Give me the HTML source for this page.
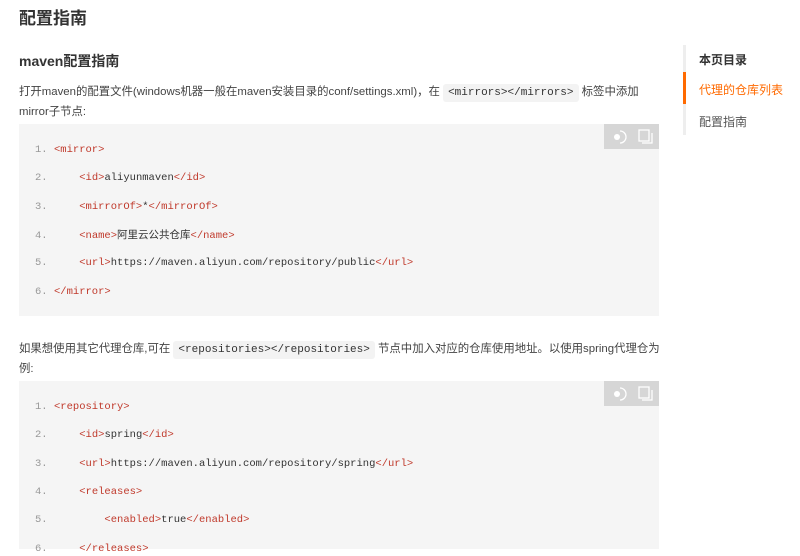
<!DOCTYPE html>
<html><head><meta charset="utf-8"><style>
body{margin:0;width:800px;height:549px;overflow:hidden;background:#fff;font-family:"Liberation Sans","Noto Sans CJK SC",sans-serif;color:#333;position:relative}
.a{position:absolute;white-space:nowrap}
h1{position:absolute;left:19px;top:4px;margin:0;font-size:17px;font-weight:bold;color:#333}
h2{position:absolute;left:19px;top:51px;margin:0;font-size:14px;font-weight:bold;color:#333}
.p{font-size:11.4px;color:#444}
code.i{font-family:"Liberation Mono",monospace;font-size:11px;background:#f3f3f3;padding:3px 5px;border-radius:3px;color:#333}
.blk{position:absolute;left:19px;width:640px;background:#f5f5f5}
.tb{position:absolute;right:0;top:0;width:55px;height:25px;background:#d6d6d6}
.ln{position:absolute;font-family:"Liberation Mono",monospace;font-size:10.5px;white-space:pre;color:#333;line-height:14px}
.ln .n{color:#999;display:inline-block;width:19px}
.t{color:#c0392b}
</style></head><body>
<h1>配置指南</h1>
<h2>maven配置指南</h2>
<div class="a p" style="left:19px;top:83px">打开maven的配置文件(windows机器一般在maven安装目录的conf/settings.xml)，在 <code class="i">&lt;mirrors&gt;&lt;/mirrors&gt;</code> 标签中添加</div>
<div class="a p" style="left:19px;top:103px">mirror子节点:</div>
<div class="blk" style="top:124px;height:192px"><div class="tb"><svg width="55" height="25"><circle cx="13" cy="13" r="3" fill="#fff"/><path d="M16 7a6 6 0 1 1 0 12" stroke="#fff" fill="none" stroke-width="1.3"/><rect x="35" y="6" width="10" height="11" fill="none" stroke="#fff" stroke-width="1.3"/><path d="M38 19h10V9" stroke="#fff" fill="none" stroke-width="1.3"/></svg></div>
<div class="ln" style="left:16px;top:19px"><span class="n">1.</span><span class="t">&lt;mirror&gt;</span></div>
<div class="ln" style="left:16px;top:47px"><span class="n">2.</span>    <span class="t">&lt;id&gt;</span>aliyunmaven<span class="t">&lt;/id&gt;</span></div>
<div class="ln" style="left:16px;top:76px"><span class="n">3.</span>    <span class="t">&lt;mirrorOf&gt;</span>*<span class="t">&lt;/mirrorOf&gt;</span></div>
<div class="ln" style="left:16px;top:104px"><span class="n">4.</span>    <span class="t">&lt;name&gt;</span><span style="font-family:'Noto Sans CJK SC',sans-serif">阿里云公共仓库</span><span class="t">&lt;/name&gt;</span></div>
<div class="ln" style="left:16px;top:132px"><span class="n">5.</span>    <span class="t">&lt;url&gt;</span>https://maven.aliyun.com/repository/public<span class="t">&lt;/url&gt;</span></div>
<div class="ln" style="left:16px;top:161px"><span class="n">6.</span><span class="t">&lt;/mirror&gt;</span></div>
</div>
<div class="a p" style="left:19px;top:340px">如果想使用其它代理仓库,可在 <code class="i">&lt;repositories&gt;&lt;/repositories&gt;</code> 节点中加入对应的仓库使用地址。以使用spring代理仓为</div>
<div class="a p" style="left:19px;top:360px">例:</div>
<div class="blk" style="top:381px;height:168px"><div class="tb"><svg width="55" height="25"><circle cx="13" cy="13" r="3" fill="#fff"/><path d="M16 7a6 6 0 1 1 0 12" stroke="#fff" fill="none" stroke-width="1.3"/><rect x="35" y="6" width="10" height="11" fill="none" stroke="#fff" stroke-width="1.3"/><path d="M38 19h10V9" stroke="#fff" fill="none" stroke-width="1.3"/></svg></div>
<div class="ln" style="left:16px;top:19px"><span class="n">1.</span><span class="t">&lt;repository&gt;</span></div>
<div class="ln" style="left:16px;top:47px"><span class="n">2.</span>    <span class="t">&lt;id&gt;</span>spring<span class="t">&lt;/id&gt;</span></div>
<div class="ln" style="left:16px;top:76px"><span class="n">3.</span>    <span class="t">&lt;url&gt;</span>https://maven.aliyun.com/repository/spring<span class="t">&lt;/url&gt;</span></div>
<div class="ln" style="left:16px;top:104px"><span class="n">4.</span>    <span class="t">&lt;releases&gt;</span></div>
<div class="ln" style="left:16px;top:132px"><span class="n">5.</span>        <span class="t">&lt;enabled&gt;</span>true<span class="t">&lt;/enabled&gt;</span></div>
<div class="ln" style="left:16px;top:161px"><span class="n">6.</span>    <span class="t">&lt;/releases&gt;</span></div>
</div>
<div class="a" style="left:683px;top:45px;width:3px;height:90px;background:#eee"></div>
<div class="a" style="left:683px;top:72px;width:3px;height:32px;background:#ff6a00"></div>
<div class="a" style="left:699px;top:51px;font-size:12px;font-weight:bold;color:#333">本页目录</div>
<div class="a" style="left:699px;top:81px;font-size:12px;color:#ff6a00">代理的仓库列表</div>
<div class="a" style="left:699px;top:113px;font-size:12px;color:#555">配置指南</div>
</body></html>
